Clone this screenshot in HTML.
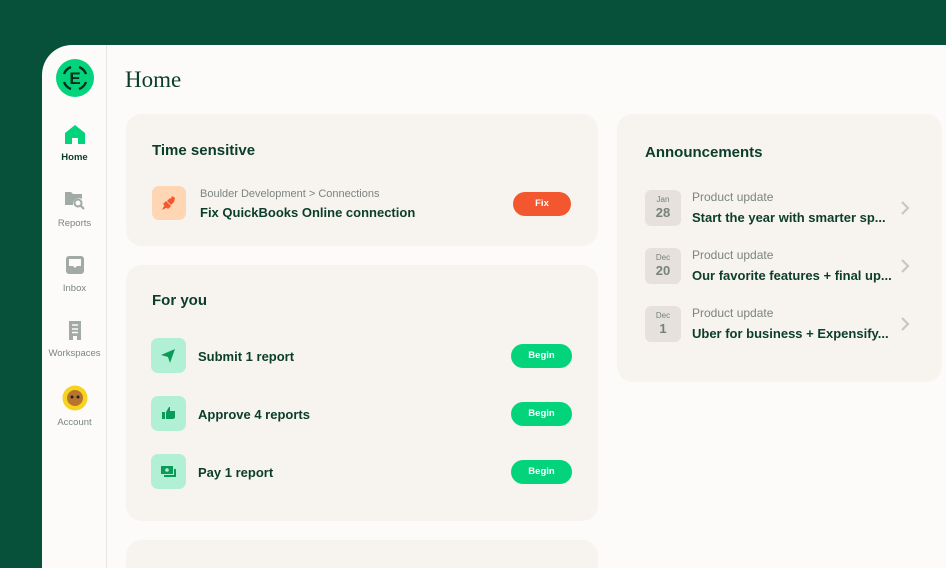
<!DOCTYPE html>
<html><head><meta charset="utf-8"><style>
*{margin:0;padding:0;box-sizing:border-box}
html,body{width:946px;height:568px;overflow:hidden}
body{background:#07503a;font-family:"Liberation Sans",sans-serif;position:relative}
.panel{position:absolute;left:42px;top:45px;width:904px;height:523px;background:#fcfbf9;border-top-left-radius:30px;overflow:hidden}
.side{position:absolute;left:0;top:0;width:65px;height:523px;border-right:1px solid #e8e4df}
.nav{position:absolute;left:0;width:65px;text-align:center;font-size:9.5px;color:#7b8580}
.nav svg{display:block;margin:0 auto 7px}
.card{position:absolute;background:#f7f3ef;border-radius:16px}
h1{position:absolute;left:83px;top:22px;font-family:"Liberation Serif",serif;font-weight:normal;font-style:normal;font-size:23px;color:#0a3d2b}
.t{font-size:15px;font-weight:bold;color:#0a3d2b;position:absolute}
.ic{position:absolute;width:35px;height:35px;border-radius:7px;background:#b1f0d5}
.lbl{position:absolute;font-size:13px;font-weight:bold;color:#0a3d2b}
.btn{position:absolute;width:61px;height:24px;border-radius:12px;background:#03d47c;color:#fff;font-size:9.5px;font-weight:bold;text-align:center;line-height:24px}
.date{position:absolute;left:28px;width:36px;height:36px;border-radius:6px;background:#e6e1dc;text-align:center;color:#76817c}
.date .m{font-size:8px;margin-top:5px}
.date .d{font-size:13px;font-weight:bold;margin-top:1px}
.pu{position:absolute;left:75px;font-size:12px;color:#7b8580}
.at{position:absolute;left:75px;font-size:13px;font-weight:bold;color:#0a3d2b}
.chev{position:absolute;left:283px}
</style></head><body>
<div class="panel">
 <div class="side">
  <svg style="position:absolute;left:14px;top:14px" width="38" height="38" viewBox="0 0 38 38">
   <circle cx="19" cy="19" r="19" fill="#03d47c"/>
   <path d="M8 15 A12 12 0 0 1 15 8 M23 8 A12 12 0 0 1 30 15 M30 23 A12 12 0 0 1 23 30 M15 30 A12 12 0 0 1 8 23" stroke="#062d1f" stroke-width="2.4" fill="none"/>
   <text x="19" y="25" text-anchor="middle" font-family="Liberation Sans" font-weight="bold" font-size="17" fill="#062d1f">E</text>
  </svg>
  <div class="nav" style="top:79px;color:#0a3d2b;font-weight:bold">
   <svg width="22" height="21" viewBox="0 0 22 21"><path d="M11 1 L21 9 V20 H14 V14 H8 V20 H1 V9 Z" fill="#03d47c"/></svg>Home</div>
  <div class="nav" style="top:145px">
   <svg width="22" height="21" viewBox="0 0 22 21"><path d="M1 2 H7 L9 4 H18 V9 A6 6 0 0 0 9 15 H1 Z" fill="#a2aaa6"/><circle cx="14" cy="13" r="3.5" stroke="#a2aaa6" stroke-width="2" fill="none"/><path d="M16.5 15.5 L20 19" stroke="#a2aaa6" stroke-width="2.2"/></svg>Reports</div>
  <div class="nav" style="top:210px">
   <svg width="22" height="21" viewBox="0 0 22 21"><rect x="2" y="1" width="18" height="18" rx="3" fill="#a2aaa6"/><path d="M5 4 H17 V11 H13 L11 13 L9 11 H5 Z" fill="#fcfbf9"/></svg>Inbox</div>
  <div class="nav" style="top:275px">
   <svg width="22" height="21" viewBox="0 0 22 21"><path d="M5 1 H17 V20 H13 V16 H9 V20 H5 Z" fill="#a2aaa6"/><path d="M8 5 H14 M8 9 H14 M8 12.5 H14" stroke="#fcfbf9" stroke-width="1.6"/></svg>Workspaces</div>
  <div class="nav" style="top:340px">
   <svg width="26" height="26" viewBox="0 0 26 26" style="margin-bottom:6px"><circle cx="13" cy="13" r="12.5" fill="#f5d31f"/><circle cx="13" cy="13" r="8" fill="#b8742f"/><circle cx="10" cy="12" r="1.5" fill="#222"/><circle cx="16" cy="12" r="1.5" fill="#222"/></svg>Account</div>
 </div>
 <h1>Home</h1>

 <div class="card" style="left:84px;top:69px;width:472px;height:132px">
  <div class="t" style="left:26px;top:28px">Time sensitive</div>
  <div class="ic" style="left:26px;top:72px;background:#ffd6b3;width:34px;height:34px">
   <svg width="34" height="34" viewBox="0 0 34 34"><path d="M10 24 L13 18 L16 21 Z M14 15 L19 20 L16 23 L11 18 Z M20 10 L23 12 L22 16 L18 15 Z M18 12 L22 16 L19 19 L15 15 Z" fill="#f25730"/></svg></div>
  <div style="position:absolute;left:74px;top:74px;font-size:11px;color:#7b8580">Boulder Development &gt; Connections</div>
  <div class="lbl" style="left:74px;top:91px">Fix QuickBooks Online connection</div>
  <div class="btn" style="left:387px;top:78px;width:58px;background:#f25730">Fix</div>
 </div>

 <div class="card" style="left:84px;top:220px;width:472px;height:256px">
  <div class="t" style="left:26px;top:27px">For you</div>
  <div class="ic" style="left:25px;top:73px"><svg width="35" height="35" viewBox="0 0 35 35"><path d="M10 17 L24 11 L19 25 L17 19 Z" fill="#0a9b58"/></svg></div>
  <div class="lbl" style="left:72px;top:84px">Submit 1 report</div>
  <div class="btn" style="left:385px;top:79px">Begin</div>
  <div class="ic" style="left:25px;top:131px"><svg width="35" height="35" viewBox="0 0 35 35"><path d="M11 16 H14 V23 H11 Z M15 16 L18 11 H19 V15 H24 V22 L22 23 H15 Z" fill="#0a9b58"/></svg></div>
  <div class="lbl" style="left:72px;top:142px">Approve 4 reports</div>
  <div class="btn" style="left:385px;top:137px">Begin</div>
  <div class="ic" style="left:25px;top:189px"><svg width="35" height="35" viewBox="0 0 35 35"><rect x="10" y="12" width="12" height="8" fill="#0a9b58"/><circle cx="16" cy="16" r="1.8" fill="#b1f0d5"/><path d="M24 15 V22 H13" stroke="#0a9b58" stroke-width="2" fill="none"/></svg></div>
  <div class="lbl" style="left:72px;top:200px">Pay 1 report</div>
  <div class="btn" style="left:385px;top:195px">Begin</div>
 </div>

 <div class="card" style="left:84px;top:495px;width:472px;height:28px;border-bottom-left-radius:0;border-bottom-right-radius:0"></div>

 <div class="card" style="left:575px;top:69px;width:325px;height:268px">
  <div class="t" style="left:28px;top:30px">Announcements</div>
  <div style="position:absolute;left:0;top:76px;width:325px">
   <div class="date"><div class="m">Jan</div><div class="d">28</div></div>
   <div class="pu" style="top:0">Product update</div>
   <div class="at" style="top:20px">Start the year with smarter sp...</div>
   <svg class="chev" style="top:10px" width="10" height="16" viewBox="0 0 10 16"><path d="M2 2 L8 8 L2 14" stroke="#c5c9c6" stroke-width="2.2" fill="none"/></svg>
  </div>
  <div style="position:absolute;left:0;top:134px;width:325px">
   <div class="date"><div class="m">Dec</div><div class="d">20</div></div>
   <div class="pu" style="top:0">Product update</div>
   <div class="at" style="top:20px">Our favorite features + final up...</div>
   <svg class="chev" style="top:10px" width="10" height="16" viewBox="0 0 10 16"><path d="M2 2 L8 8 L2 14" stroke="#c5c9c6" stroke-width="2.2" fill="none"/></svg>
  </div>
  <div style="position:absolute;left:0;top:192px;width:325px">
   <div class="date"><div class="m">Dec</div><div class="d">1</div></div>
   <div class="pu" style="top:0">Product update</div>
   <div class="at" style="top:20px">Uber for business + Expensify...</div>
   <svg class="chev" style="top:10px" width="10" height="16" viewBox="0 0 10 16"><path d="M2 2 L8 8 L2 14" stroke="#c5c9c6" stroke-width="2.2" fill="none"/></svg>
  </div>
 </div>
</div>
</body></html>
